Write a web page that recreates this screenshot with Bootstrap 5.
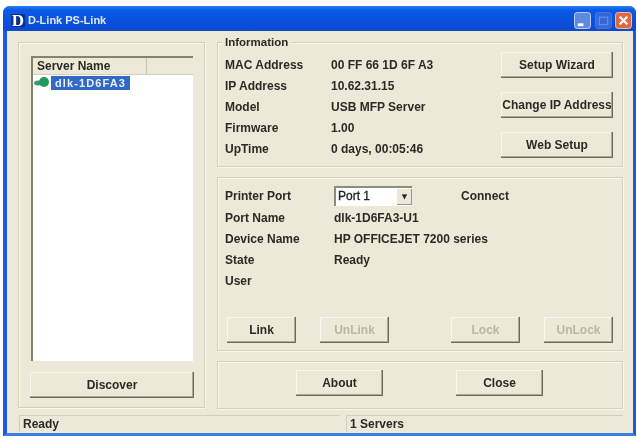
<!DOCTYPE html>
<html lang="en">
<head>
  <meta charset="UTF-8">
  <title>D-Link PS-Link</title>
  <link href="https://cdn.jsdelivr.net/npm/bootstrap@5.3.0/dist/css/bootstrap.min.css" rel="stylesheet">
  <style>
    html, body { height: 100%; background: #fff; overflow: hidden; }
    body { font-family: "Liberation Sans", Arial, sans-serif; font-size: 12px; font-weight: 700; color: #2b2b26; padding: 6px 1px 0 3px; }
    .xp-win { height: 430px; background: #ece9d8; border: solid #1a5ce0; border-width: 0 3px 3px 4px; border-bottom-color: #3c80e0; border-radius: 7px 7px 0 0; filter: blur(.4px); }
    .xp-title { height: 25px; margin: 0 -3px 0 -4px; padding: 4px 4px 0 8px; border-radius: 7px 7px 0 0; color: #dfe8fb; font-size: 11px; background: linear-gradient(#2a80f2 0, #0a5ae6 4px, #0a52dc 14px, #0b49cf 100%); }
    .xp-logo { font-family: "Liberation Serif", serif; font-size: 17px; color: #fff; background: #0a2f8c; width: 14px; height: 13px; line-height: 13px; text-align: center; margin-right: 3px; }
    .xp-ctl { width: 17px; height: 17px; display: block; margin-left: 3.5px; }
    .xp-main { padding: 11px 10px 0 11px; gap: 12px; }
    .xp-group { border: 1px solid #d2cfbb; box-shadow: inset 1px 1px 0 #f8f7f0, 1px 1px 0 #f8f7f0; position: relative; }
    .xp-left { width: 187px; height: 366px; padding: 13px 11px 0 12px; }
    .xp-right { width: 406px; gap: 10px; }
    .xp-list { width: 162px; height: 305px; background: #fff; border-top: 2px solid #85836f; border-left: 2px solid #85836f; }
    .xp-head { height: 17px; background: #ece9d8; border-bottom: 1px solid #d2cfbb; padding-left: 4px; line-height: 16px; }
    .xp-head span { display: block; width: 110px; border-right: 1px solid #c8c5b0; height: 16px; }
    .xp-item { padding: 0 0 0 1px; height: 16px; }
    .xp-sel { background: #316ac5; color: #e8eefc; padding: 0 4px; margin-left: 1px; letter-spacing: 1.1px; line-height: 14px; height: 14px; font-size: 11px; }
    .xp-btn { border: 0; background: #ece9d8; color: #2b2b26; font-weight: 700; font-size: 12px; padding: 0; height: 26px; box-shadow: inset -1px -1px 0 #6d6b5a, inset -2px -2px 0 #aca899, inset 1px 1px 0 #f8f7f0; }
    .xp-btn.off { color: #b8b6a6; }
    .xp-discover { width: 164px; height: 26px; margin: 11px 0 0 -1px; }
    .xp-info { height: 125px; padding: 12px 9px 0 7px; }
    .xp-legend { position: absolute; top: -8px; left: 4px; background: #ece9d8; padding: 0 3px; line-height: 15px; font-size: 11.5px; }
    .xp-row { height: 21px; line-height: 21px; }
    .xp-key { width: 106px; }
    .xp-val { margin-left: 3px; }
    .xp-btns { width: 112px; margin-top: -3px; gap: 14px; }
    .xp-btns .xp-btn { height: 26px; }
    .xp-printer { height: 174px; padding: 7px 9px 0 7px; }
    .xp-select { width: 78px; height: 20px; background: #fff; border-top: 2px solid #8e8c79; border-left: 2px solid #8e8c79; padding-left: 2px; font-size: 12px; font-weight: 400; -webkit-text-stroke: .3px #222; margin: 0 49px 0 3px; line-height: 16px; color: #222; }
    .xp-arrow { width: 15px; height: 16px; margin: 1px 0 0 0; background: #ece9d8; box-shadow: inset -1px -1px 0 #9a988a; font-size: 8px; line-height: 16px; text-align: center; }
    .xp-portline { height: 22px; align-items: center; margin-bottom: 1px; }
    .xp-link { margin: 25px 0 0 2px; }
    .xp-link .xp-btn { width: 70px; }
    .xp-lock { margin-left: 62px; }
    .xp-about { height: 48px; padding: 8px 0 0 78px; gap: 73px; }
    .xp-about .xp-btn { width: 87px; }
    .xp-status { gap: 6px; padding: 6px 10px 0 12px; }
    .xp-cell { height: 17px; line-height: 17px; border-top: 1px solid #d2cfbb; border-left: 1px solid #d2cfbb; padding-left: 3px; }
    .xp-cell-a { width: 321px; }
  </style>
</head>
<body>
  <div class="xp-win">
    <div class="xp-title d-flex align-items-center">
      <div class="xp-logo">D</div>
      <div class="flex-grow-1">D-Link PS-Link</div>
      <svg class="xp-ctl" viewBox="0 0 18 18"><rect x=".5" y=".5" width="17" height="17" rx="3" fill="#5f8ae0" stroke="#c6d6f4"/><rect x="4" y="12" width="6" height="3" fill="#fff"/></svg>
      <svg class="xp-ctl" viewBox="0 0 18 18"><rect x=".5" y=".5" width="17" height="17" rx="3" fill="#3468d8" stroke="#4a78e0"/><rect x="4.5" y="5.5" width="9" height="8" fill="none" stroke="#7096e4"/></svg>
      <svg class="xp-ctl" viewBox="0 0 18 18"><rect x=".5" y=".5" width="17" height="17" rx="3" fill="#e2683f" stroke="#f0c8b4"/><path d="M5 5l8 8M13 5l-8 8" stroke="#fff" stroke-width="2.4"/></svg>
    </div>

    <div class="xp-main d-flex">
      <div class="xp-group xp-left">
        <div class="xp-list">
          <div class="xp-head"><span>Server Name</span></div>
          <div class="xp-item d-flex align-items-center">
            <svg width="16" height="12" viewBox="0 0 16 12"><ellipse cx="4" cy="6" rx="4" ry="2.5" fill="#3f9a78"/><circle cx="10" cy="5" r="5" fill="#1f9a5a"/></svg>
            <span class="xp-sel">dlk-1D6FA3</span>
          </div>
        </div>
        <button class="xp-btn xp-discover d-block">Discover</button>
      </div>

      <div class="xp-right d-flex flex-column">
        <div class="xp-group xp-info d-flex">
          <div class="xp-legend">Information</div>
          <div class="flex-grow-1">
            <div class="xp-row d-flex"><div class="xp-key">MAC Address</div><div>00 FF 66 1D 6F A3</div></div>
            <div class="xp-row d-flex"><div class="xp-key">IP Address</div><div>10.62.31.15</div></div>
            <div class="xp-row d-flex"><div class="xp-key">Model</div><div>USB MFP Server</div></div>
            <div class="xp-row d-flex"><div class="xp-key">Firmware</div><div>1.00</div></div>
            <div class="xp-row d-flex"><div class="xp-key">UpTime</div><div>0 days, 00:05:46</div></div>
          </div>
          <div class="xp-btns d-flex flex-column">
            <button class="xp-btn">Setup Wizard</button>
            <button class="xp-btn">Change IP Address</button>
            <button class="xp-btn">Web Setup</button>
          </div>
        </div>

        <div class="xp-group xp-printer">
          <div class="xp-portline d-flex">
            <div class="xp-key">Printer Port</div>
            <div class="xp-select d-flex justify-content-between">Port 1<div class="xp-arrow">&#9660;</div></div>
            <div>Connect</div>
          </div>
          <div class="xp-row d-flex"><div class="xp-key">Port Name</div><div class="xp-val">dlk-1D6FA3-U1</div></div>
          <div class="xp-row d-flex"><div class="xp-key">Device Name</div><div class="xp-val">HP OFFICEJET 7200 series</div></div>
          <div class="xp-row d-flex"><div class="xp-key">State</div><div class="xp-val">Ready</div></div>
          <div class="xp-row d-flex"><div class="xp-key">User</div></div>
          <div class="xp-link d-flex">
            <button class="xp-btn">Link</button>
            <button class="xp-btn off ms-4">UnLink</button>
            <button class="xp-btn off xp-lock">Lock</button>
            <button class="xp-btn off ms-4">UnLock</button>
          </div>
        </div>

        <div class="xp-group xp-about d-flex">
          <button class="xp-btn">About</button>
          <button class="xp-btn">Close</button>
        </div>
      </div>
    </div>

    <div class="xp-status d-flex">
      <div class="xp-cell xp-cell-a">Ready</div>
      <div class="xp-cell flex-grow-1">1 Servers</div>
    </div>
  </div>
</body>
</html>
